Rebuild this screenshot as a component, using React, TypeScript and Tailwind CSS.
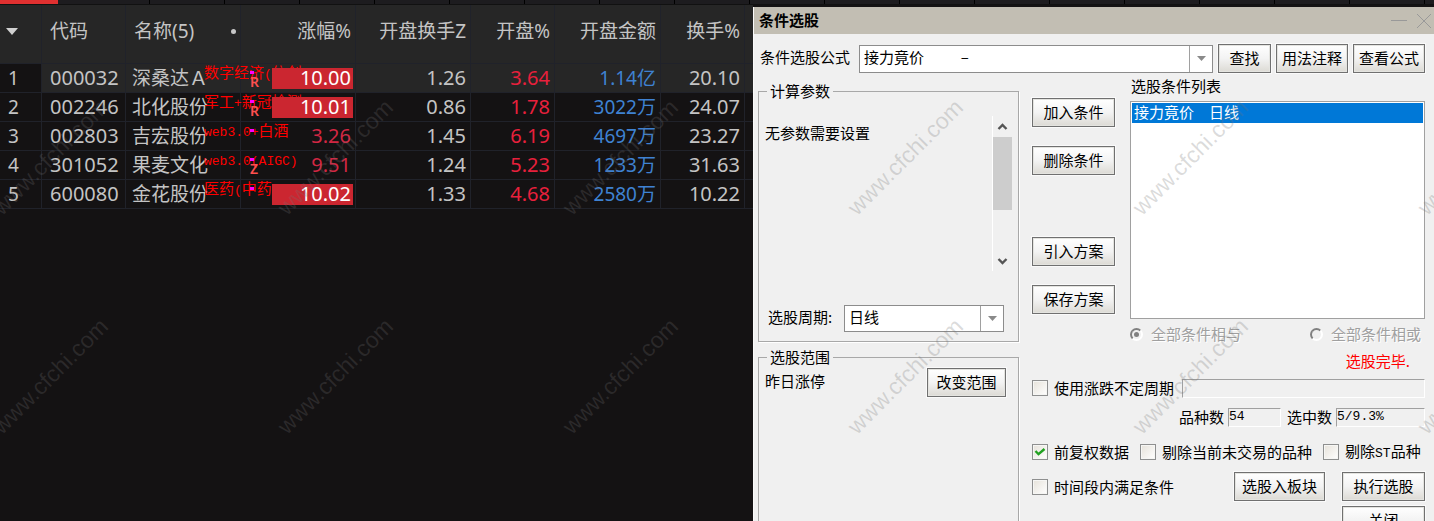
import type { ReactNode } from "react";

type Stock = {
  code: string;
  name: string;
  theme: string;
  mark?: string;
  change: string;
  limitUp?: boolean;
  openTurnover: string;
  open: string;
  amount: string;
  turnover: string;
};

const stocks: Stock[] = [
  { code: "000032", name: "深桑达Ａ", theme: "数字经济(信创)", mark: "R", change: "10.00", limitUp: true, openTurnover: "1.26", open: "3.64", amount: "1.14亿", turnover: "20.10" },
  { code: "002246", name: "北化股份", theme: "军工+新冠检测", mark: "R", change: "10.01", limitUp: true, openTurnover: "0.86", open: "1.78", amount: "3022万", turnover: "24.07" },
  { code: "002803", name: "吉宏股份", theme: "web3.0+白酒", change: "3.26", openTurnover: "1.45", open: "6.19", amount: "4697万", turnover: "23.27" },
  { code: "301052", name: "果麦文化", theme: "web3.0(AIGC)", mark: "Z", change: "9.51", openTurnover: "1.24", open: "5.23", amount: "1233万", turnover: "31.63" },
  { code: "600080", name: "金花股份", theme: "医药(中药)", change: "10.02", limitUp: true, openTurnover: "1.33", open: "4.68", amount: "2580万", turnover: "10.22" },
];

/* Sets ASCII runs in a half-width monospace face beside full-width characters. */
function Mixed({ text }: { text: string }) {
  return (
    <>
      {text.split(/([\x21-\x7e]+)/).map((part, i) =>
        i % 2 ? (
          <span key={i} className="font-['Liberation_Mono',monospace] text-[13px]">{part}</span>
        ) : (
          part
        ),
      )}
    </>
  );
}

function TabStrip() {
  return (
    <div className="flex h-[5px] shrink-0 overflow-hidden border-b border-[#111111] bg-[#1d1c1f]">
      <div className="w-[58px] shrink-0 bg-[#e03030]" />
      <div className="w-[92px] shrink-0 border-r border-black" />
      {Array.from({ length: 24 }, (_, i) => (
        <div key={i} className="w-[75px] shrink-0 border-r border-black" />
      ))}
    </div>
  );
}

const th = "border-r border-b border-[#20222a] pr-1 pb-1.5 text-right font-normal";
const td = "border-r border-b border-[#20222a] p-0 pr-1 text-right text-[20px]";

function StockTable() {
  return (
    <table className="w-full table-fixed border-separate border-spacing-0 font-['Noto_Sans','Noto_Sans_CJK_SC',sans-serif] text-[19px] leading-5 whitespace-nowrap text-[#c4c4c4]">
      <colgroup>
        <col className="w-[42px]" />
        <col className="w-[84px]" />
        <col className="w-[115px]" />
        <col className="w-[115px]" />
        <col className="w-[115px]" />
        <col className="w-[84px]" />
        <col className="w-[106px]" />
        <col className="w-[84px]" />
        <col />
      </colgroup>
      <thead className="bg-[#262626]">
        <tr className="h-[59px]">
          <th className="border-r border-b border-[#20222a] p-0 pb-1.5 pl-1.5 text-left">
            <svg width="12" height="7" viewBox="0 0 12 7" aria-hidden="true">
              <path d="M0 0h12L6 7z" fill="#d0d0d0" />
            </svg>
          </th>
          <th className="border-r border-b border-[#20222a] p-0 pb-1.5 pl-2 text-left font-normal">代码</th>
          <th className="border-r border-b border-[#20222a] p-0 pb-1.5 pl-2 font-normal">
            <div className="flex items-center justify-between pr-1">
              <span>名称(5)</span>
              <span className="size-[5px] rounded-full bg-[#c8c8c8]" />
            </div>
          </th>
          <th className={th}>涨幅%</th>
          <th className={th}>开盘换手Z</th>
          <th className={th}>开盘%</th>
          <th className={th}>开盘金额</th>
          <th className={th}>换手%</th>
          <th className="border-b border-[#20222a]" />
        </tr>
      </thead>
      <tbody>
        {stocks.map((s, i) => (
          <tr key={s.code} className={i === 0 ? "h-[29px] bg-[#262626]" : "h-[29px]"}>
            <td className="border-r border-b border-[#20222a] bg-[#141213] p-0 pl-2 text-left">{i + 1}</td>
            <td className="border-r border-b border-[#20222a] p-0 pl-2 text-left text-[20px]">{s.code}</td>
            <td className="relative border-r border-b border-[#20222a] p-0 pl-1.5 text-left">
              {s.name}
              <span className="absolute top-0 left-[78px] font-['Noto_Sans_CJK_SC',sans-serif] text-[15px] leading-4 text-[#ff0000]">
                <Mixed text={s.theme} />
              </span>
            </td>
            <td className="relative border-r border-b border-[#20222a] p-0 pr-0.5 text-[20px]">
              <span className="absolute top-[7px] left-[9px] h-[3px] w-1 bg-[#ff00ff]" />
              {s.mark && (
                <span className="absolute top-[11px] left-[9px] font-['Noto_Sans',sans-serif] text-[14px] leading-[14px] font-semibold text-[#ff5050]">
                  {s.mark}
                </span>
              )}
              {s.limitUp ? (
                <span className="relative ml-auto block h-[21px] w-[81px] bg-[#cb2630] pr-0.5 text-right text-white">{s.change}</span>
              ) : (
                <span className="block pr-0.5 text-right text-[#d32743]">{s.change}</span>
              )}
            </td>
            <td className={td}>{s.openTurnover}</td>
            <td className={td}><span className="text-[#e8203c]">{s.open}</span></td>
            <td className={td}><span className="text-[19px] text-[#3f82d2]">{s.amount}</span></td>
            <td className={td}>{s.turnover}</td>
            <td className="border-b border-[#20222a] p-0" />
          </tr>
        ))}
      </tbody>
    </table>
  );
}

function Button({ children, width }: { children: ReactNode; width: string }) {
  return (
    <button
      type="button"
      className={`h-[29px] shrink-0 border border-[#707070] bg-linear-to-b from-white via-[#f3f3f3] to-[#dcdad4] pb-0.5 whitespace-nowrap shadow-[inset_0_0_0_1px_#e4e4e0,0_0_0_1px_#fafafa] ${width}`}
    >
      {children}
    </button>
  );
}

function Combo({ id, value, className }: { id: string; value: string; className: string }) {
  return (
    <div className={`relative border border-[#8c8c8c] bg-white ${className}`}>
      <select id={id} className="h-full w-full appearance-none bg-transparent pr-6 pb-1 pl-1 outline-none">
        <option>{value}</option>
      </select>
      <span className="pointer-events-none absolute inset-y-0 right-0 flex w-[23px] items-center justify-center border-l border-[#a0a0a0]">
        <svg width="9" height="5" viewBox="0 0 9 5" aria-hidden="true">
          <path d="M0 0h9L4.500 5z" fill="#8a8a8a" />
        </svg>
      </span>
    </div>
  );
}

function Check({ label, checked }: { label: string; checked?: boolean }) {
  return (
    <label className="flex h-5 shrink-0 items-center gap-1.5 whitespace-nowrap">
      <span className="relative size-4">
        <input
          type="checkbox"
          defaultChecked={checked}
          className="peer block size-4 appearance-none border border-[#8e8f8f] bg-linear-to-br from-[#e6e2da] to-white shadow-[inset_0_0_0_1px_#f6f6f4]"
        />
        <svg className="pointer-events-none absolute inset-0 hidden peer-checked:block" width="16" height="16" viewBox="0 0 16 16" aria-hidden="true">
          <path d="M3.500 7l3 3.200L12.500 5" fill="none" stroke="#21a121" strokeWidth="2.400" />
        </svg>
      </span>
      <span><Mixed text={label} /></span>
    </label>
  );
}

function Radio({ label, checked }: { label: string; checked?: boolean }) {
  return (
    <label className="flex items-center gap-2 whitespace-nowrap text-[#a0a0a0] [text-shadow:1px_1px_0_#ffffff]">
      <span className="relative size-[13px]">
        <input
          type="radio"
          name="combine"
          defaultChecked={checked}
          disabled
          className="peer block size-[13px] appearance-none rounded-full border-2 border-t-[#808080] border-r-white border-b-white border-l-[#808080] bg-[#f0f0f0]"
        />
        <span className="absolute top-1 left-1 hidden size-[5px] rounded-full bg-[#808080] peer-checked:block" />
      </span>
      {label}
    </label>
  );
}

const sunken = "h-[19px] min-w-0 border border-t-[#a0a0a0] border-r-white border-b-white border-l-[#a0a0a0] bg-transparent outline-none";

function Scrollbar() {
  return (
    <div className="mt-[15px] flex h-[155px] w-5 flex-col items-center border-l border-white" aria-hidden="true">
      <svg className="my-1.5 shrink-0" width="11" height="9" viewBox="0 0 11 9">
        <path d="M1.500 7L5.500 3l4 4" fill="none" stroke="#555555" strokeWidth="2.400" />
      </svg>
      <div className="h-[73px] w-full bg-[#cdcdcd]" />
      <svg className="mt-auto mb-[5px] shrink-0" width="11" height="9" viewBox="0 0 11 9">
        <path d="M1.500 2l4 4 4-4" fill="none" stroke="#555555" strokeWidth="2.400" />
      </svg>
    </div>
  );
}

const box = "min-w-0 border border-[#a8a8a8] pr-1.5 pl-1.5 shadow-[1px_1px_0_#ffffff]";

function Dialog() {
  return (
    <section
      aria-label="条件选股"
      className="mt-0.5 flex min-h-0 min-w-0 flex-col overflow-hidden border-l border-[#fafafa] bg-[#f0f0f0] font-['Noto_Sans_CJK_SC',sans-serif] text-[15px] leading-5 text-black"
    >
      <header className="flex h-[27px] shrink-0 items-center justify-between bg-[#c2beb3] pl-[5px]">
        <h1 className="pb-0.5 font-bold">条件选股</h1>
        <svg width="44" height="16" viewBox="0 0 44 16" fill="none" stroke="#999999" aria-hidden="true">
          <path d="M1 7.500h16" />
          <path d="M27 1l14 14M41 1L27 15" />
        </svg>
      </header>
      <div className="flex shrink-0 flex-col pt-2.5 pr-[9px] pl-1">
        <div className="flex items-center">
          <label htmlFor="formula" className="shrink-0 pr-[9px] pb-1 pl-0.5">条件选股公式</label>
          <Combo id="formula" value={"接力竟价\u3000\u3000\u00a0\u00a0–"} className="h-7 min-w-0 flex-1" />
          <div className="flex gap-[5px] pl-[5px]">
            <Button width="w-[53px]">查找</Button>
            <Button width="w-[72px]">用法注释</Button>
            <Button width="w-[72px]">查看公式</Button>
          </div>
        </div>
        <div className="mt-[3px] grid grid-cols-[minmax(0,1fr)_393px] gap-[13px]">
          <div className="flex flex-col gap-[5px] pt-[5px]">
            <fieldset className={box}>
              <legend className="ml-0.5 px-[3px]">计算参数</legend>
              <div className="flex justify-between">
                <p className="pt-[22px]">无参数需要设置</p>
                <Scrollbar />
              </div>
              <div className="mt-[34px] mb-[9px] flex items-center pr-2 pl-[3px]">
                <label htmlFor="period" className="shrink-0 pb-1">选股周期:</label>
                <Combo id="period" value="日线" className="ml-auto h-[27px] w-40" />
              </div>
            </fieldset>
            <fieldset className={`${box} flex-1`}>
              <legend className="ml-0.5 px-[3px]">选股范围</legend>
              <div className="flex items-start justify-between pr-1.5">
                <span className="pt-1">昨日涨停</span>
                <div className="pt-px"><Button width="w-[79px]">改变范围</Button></div>
              </div>
            </fieldset>
          </div>
          <div className="flex flex-col">
            <div className="flex gap-[15px]">
              <div className="flex flex-col gap-[62px] pt-[22px]">
                <div className="flex flex-col gap-[19px]">
                  <Button width="w-[83px]">加入条件</Button>
                  <Button width="w-[83px]">删除条件</Button>
                </div>
                <div className="flex flex-col gap-[19px]">
                  <Button width="w-[83px]">引入方案</Button>
                  <Button width="w-[83px]">保存方案</Button>
                </div>
              </div>
              <div className="min-w-0 flex-1">
                <h2 id="conditions" className="pl-px">选股条件列表</h2>
                <ul role="listbox" aria-labelledby="conditions" className="mt-[5px] h-[218px] border border-[#a0a0a0] bg-white p-px">
                  <li role="option" aria-selected="true" className="bg-[#0078d7] pb-0.5 pl-0.5 leading-[18px] text-white">接力竟价&#12288;日线</li>
                </ul>
                <div className="mt-[5px] flex justify-between pr-1">
                  <Radio label="全部条件相与" checked />
                  <Radio label="全部条件相或" />
                </div>
                <p className="mt-[7px] pr-[15px] text-right text-[#ff0000]">选股完毕.</p>
              </div>
            </div>
            <div className="mt-[7px] flex h-5 items-center gap-2">
              <Check label="使用涨跌不定周期" />
              <input type="text" aria-label="不定周期" className={`${sunken} flex-1`} />
            </div>
            <div className="mt-[9px] flex h-5 items-center justify-end gap-1">
              <label htmlFor="total">品种数</label>
              <input id="total" readOnly value="54" className={`${sunken} mr-0.5 w-[53px] font-['Liberation_Mono',monospace] text-[13px]`} />
              <label htmlFor="picked">选中数</label>
              <input id="picked" readOnly value="5/9.3%" className={`${sunken} w-[89px] font-['Liberation_Mono',monospace] text-[13px]`} />
            </div>
            <div className="mt-[15px] flex gap-[11px]">
              <Check label="前复权数据" checked />
              <Check label="剔除当前未交易的品种" />
              <Check label="剔除ST品种" />
            </div>
            <div className="mt-2.5 flex items-center">
              <Check label="时间段内满足条件" />
              <div className="ml-auto flex gap-[17px]">
                <Button width="w-[91px]">选股入板块</Button>
                <Button width="w-[83px]">执行选股</Button>
              </div>
            </div>
            <div className="mt-[5px] flex justify-end pb-3">
              <Button width="w-[83px]">关闭</Button>
            </div>
          </div>
        </div>
      </div>
    </section>
  );
}

function Watermark() {
  return (
    <div className="pointer-events-none absolute top-[47px] -left-[92px] grid auto-rows-[219px] grid-cols-[repeat(6,285px)] place-items-center select-none" aria-hidden="true">
      {Array.from({ length: 12 }, (_, i) => (
        <span key={i} className="-rotate-45 font-['Liberation_Sans',sans-serif] text-[23px] leading-6 text-[#717171]/25">
          www.cfchi.com
        </span>
      ))}
    </div>
  );
}

export default function App() {
  return (
    <div className="relative flex h-screen flex-col overflow-hidden bg-[#141213]">
      <TabStrip />
      <main className="grid min-h-0 flex-1 grid-cols-[753fr_681fr]">
        <div className="min-w-0 overflow-hidden">
          <StockTable />
        </div>
        <Dialog />
      </main>
      <Watermark />
    </div>
  );
}
